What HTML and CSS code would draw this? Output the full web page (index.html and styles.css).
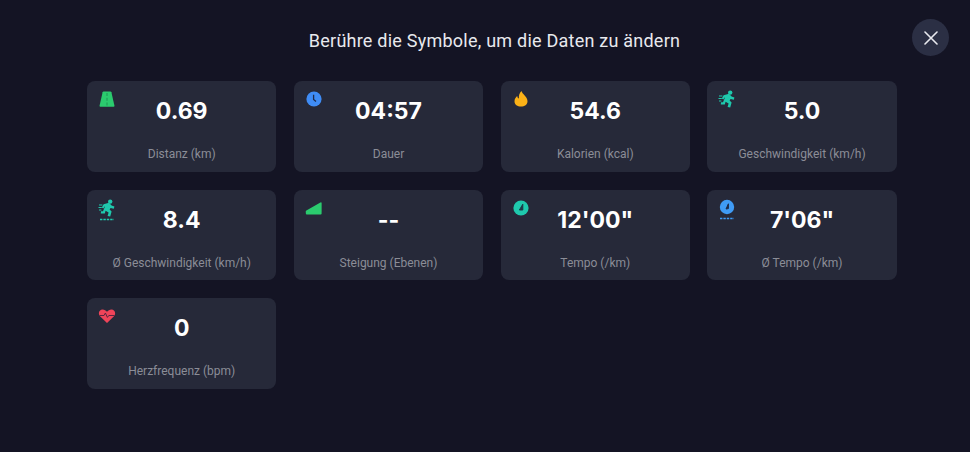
FILE: index.html
```html
<!DOCTYPE html>
<html lang="de">
<head>
<meta charset="UTF-8">
<meta name="viewport" content="width=device-width, initial-scale=1.0">
<title>Daten ändern</title>
<link rel="stylesheet" href="styles.css">
</head>
<body>

<div class="container">
    <div class="header">
        <div class="title">Berühre die Symbole, um die Daten zu ändern</div>
        <div class="close">
            <svg width="14" height="14" viewBox="0 0 14 14"><path d="M1 1L13 13M13 1L1 13" stroke="#e8e9ee" stroke-width="1.6" stroke-linecap="round"/></svg>
        </div>
    </div>
    <div class="grid">
        <div class="card">
            <svg class="icon" width="18" height="18" viewBox="0 0 18 18"><path d="M5.6 1.5H12.4Q13.2 1.5 13.4 2.3L16.4 15.6Q16.6 16.8 15.6 16.8H2.4Q1.4 16.8 1.6 15.6L4.6 2.3Q4.8 1.5 5.6 1.5Z" fill="#2bcb6e"/><path d="M9 3V6M9 7.8V10.8M9 12.6V15.4" stroke="#1f9a58" stroke-width="1.1"/></svg>
            <div class="value">0.69</div>
            <div class="label">Distanz (km)</div>
        </div>
        <div class="card">
            <svg class="icon" width="18" height="18" viewBox="0 0 18 18"><circle cx="9" cy="9" r="7.6" fill="#3f8cf5"/><path d="M8.6 4.8V9.4L11 11.4" fill="none" stroke="#1f2a4a" stroke-width="1.3"/></svg>
            <div class="value">04:57</div>
            <div class="label">Dauer</div>
        </div>
        <div class="card">
            <svg class="icon" width="18" height="18" viewBox="0 0 18 18"><path d="M9.5 1C10 4 15.5 6.5 15.5 11.2C15.5 14.6 12.6 16.6 9 16.6C5.4 16.6 2.5 14.6 2.5 11.2C2.5 8.8 3.9 7.2 5.2 6C5.4 7.4 6 8.2 6.9 8.4C6.6 5.6 7.6 2.6 9.5 1Z" fill="#fbb117"/></svg>
            <div class="value">54.6</div>
            <div class="label">Kalorien (kcal)</div>
        </div>
        <div class="card">
            <svg class="icon" width="18" height="18" viewBox="0 0 18 18"><circle cx="12.2" cy="2.6" r="2.2" fill="#1fc9ad"/><path d="M5.6 5.2L11 3.8L13.6 6.6L16.4 7.4L15.8 9.8L12.6 9L11.6 10.4L13.6 12.4L12.2 17.6L9.6 17L10.6 13.4L7.6 11.8L6.8 14.6L2.8 14.4L3 12.2L5 12.2L7 7.6L6.4 7.8L5.4 9.6L3.8 8.4Z" fill="#1fc9ad"/><path d="M1 6H4.4M0.5 8.5H3.8M1 11H3.4" stroke="#1fc9ad" stroke-width="1.1"/></svg>
            <div class="value">5.0</div>
            <div class="label">Geschwindigkeit (km/h)</div>
        </div>
        <div class="card">
            <svg class="icon tall" width="18" height="22" viewBox="0 0 18 22"><circle cx="12.2" cy="2.6" r="2.2" fill="#1fc9ad"/><path d="M5.6 5.2L11 3.8L13.6 6.6L16.4 7.4L15.8 9.8L12.6 9L11.6 10.4L13.6 12.4L12.2 17.6L9.6 17L10.6 13.4L7.6 11.8L6.8 14.6L2.8 14.4L3 12.2L5 12.2L7 7.6L6.4 7.8L5.4 9.6L3.8 8.4Z" fill="#1fc9ad"/><path d="M1 6H4.4M0.5 8.5H3.8M1 11H3.4" stroke="#1fc9ad" stroke-width="1.1"/><path d="M2 20.5H16" stroke="#1fc9ad" stroke-width="1.6" stroke-dasharray="2.4 1"/></svg>
            <div class="value">8.4</div>
            <div class="label">Ø Geschwindigkeit (km/h)</div>
        </div>
        <div class="card">
            <svg class="icon" width="18" height="18" viewBox="0 0 18 18"><path d="M1.4 11.6L15.4 3.4Q16.6 2.8 16.6 4V14.4Q16.6 15.4 15.6 15.4H1.8Q0.8 15.4 0.8 14.2V12.6Q0.8 12 1.4 11.6Z" fill="#2bcb6e"/></svg>
            <div class="value">--</div>
            <div class="label">Steigung (Ebenen)</div>
        </div>
        <div class="card">
            <svg class="icon" width="18" height="18" viewBox="0 0 18 18"><circle cx="9" cy="9" r="7.6" fill="#1fc9ad"/><path d="M7.4 11L10.8 5.2L10.8 11Z" fill="#1c3a48" stroke="#1c3a48"/></svg>
            <div class="value">12'00"</div>
            <div class="label">Tempo (/km)</div>
        </div>
        <div class="card">
            <svg class="icon tall" width="18" height="22" viewBox="0 0 18 22"><circle cx="9" cy="8" r="7.2" fill="#3f9bf5"/><path d="M8 10L10.4 4.8L10.4 9.6Z" fill="#1c2a48" stroke="#1c2a48"/><path d="M2 19.5H16" stroke="#3f9bf5" stroke-width="1.6" stroke-dasharray="2.4 1"/></svg>
            <div class="value">7'06"</div>
            <div class="label">Ø Tempo (/km)</div>
        </div>
        <div class="card">
            <svg class="icon" width="18" height="18" viewBox="0 0 18 18"><path d="M9 16L2 9.2C-0.4 6.4 1.2 2.4 4.6 2.4C6.4 2.4 8 3.4 9 4.8C10 3.4 11.6 2.4 13.4 2.4C16.8 2.4 18.4 6.4 16 9.2Z" fill="#ef4459"/><path d="M1.5 8.5H6L7.4 6L9.4 10.4L10.8 8.5H16.5" fill="none" stroke="#5a2540" stroke-width="1"/></svg>
            <div class="value">0</div>
            <div class="label">Herzfrequenz (bpm)</div>
        </div>
    </div>
</div>

</body>
</html>
```

FILE: styles.css
```css
body {
    font-family: Roboto, "Liberation Sans", sans-serif;
    background-color: #141424;
    margin: 0;
    height: 452px;
    overflow: hidden;
}
.container {
    width: 970px;
    height: 452px;
    padding: 0 73px 0 87px;
    box-sizing: border-box;
}
.header {
    height: 81px;
    padding-left: 5px;
    display: flex;
    justify-content: center;
    position: relative;
}
.title {
    margin-top: 29px;
    font-size: 18px;
    line-height: 24px;
    letter-spacing: 0.23px;
    color: #e8e9ee;
}
.close {
    position: absolute;
    top: 19px;
    right: -52px;
    width: 37px;
    height: 37px;
    border-radius: 50%;
    background: #2b2f44;
    display: flex;
    align-items: center;
    justify-content: center;
}
.grid {
    display: grid;
    grid-template-columns: repeat(4, 189.4px);
    grid-auto-rows: 90.5px;
    column-gap: 17.4px;
    row-gap: 18px;
}
.card {
    position: relative;
    background: #262939;
    border-radius: 8px;
    text-align: center;
}
.icon {
    position: absolute;
    top: 9px;
    left: 11px;
}
.value {
    margin-top: 14px;
    font-family: Inter, Roboto, sans-serif;
    font-size: 23px;
    line-height: 32px;
    font-weight: 700;
    color: #ffffff;
}
.label {
    margin-top: 19px;
    font-size: 12px;
    line-height: 16px;
    color: #8b8d97;
}
```
